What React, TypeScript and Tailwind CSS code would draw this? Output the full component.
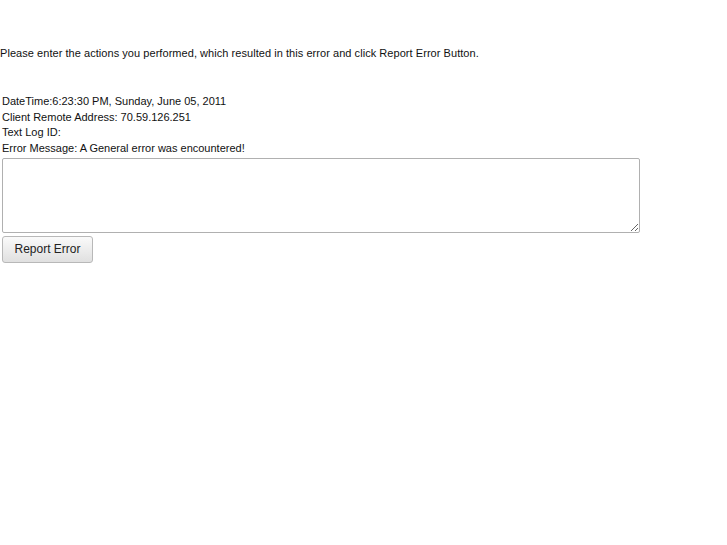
export default function App() {
  return (
    <div className="min-h-[545px] bg-white text-[#111] font-['Liberation_Sans',Arial,sans-serif] text-[11px] leading-[15px]">
      <p className="pt-[46px] tracking-[0.05px]">
        Please enter the actions you performed, which resulted in this error and click Report Error Button.
      </p>
      <div className="mt-[33px] px-[2px]">
        <div className="h-[15.5px]">DateTime:6:23:30 PM, Sunday, June 05, 2011</div>
        <div className="h-[15.5px]">Client Remote Address: 70.59.126.251</div>
        <div className="h-[15.5px]">Text Log ID:</div>
        <div className="h-[15.5px]">Error Message: A General error was encountered!</div>
        <textarea className="mt-[2px] block w-[638px] h-[75px] rounded-[2px] border border-[#b0b0b0] bg-white outline-none" />
        <button
          type="button"
          className="mt-[3px] block w-[91px] h-[27px] rounded-[3px] border border-[#b8b8b8] bg-gradient-to-b from-[#fafafa] to-[#e0e0e0] text-[12px] text-[#222]"
        >
          Report Error
        </button>
      </div>
    </div>
  );
}
